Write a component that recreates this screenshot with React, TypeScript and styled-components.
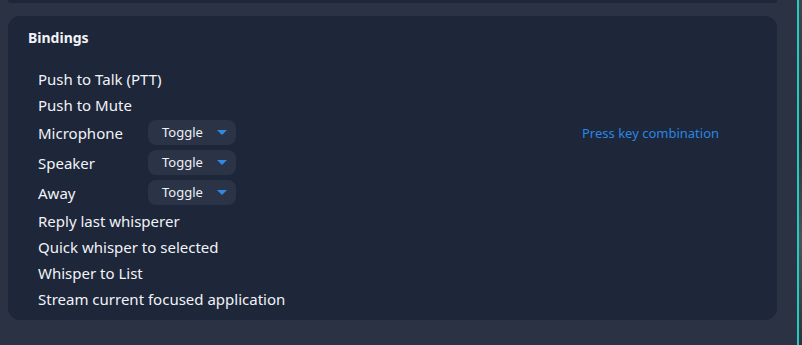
import { createGlobalStyle } from 'styled-components';
import styled from 'styled-components';

const GlobalStyle = createGlobalStyle`
  html, body {
    margin: 0;
    padding: 0;
    background: #2b3244;
  }
  body {
    font-family: 'Noto Sans', 'Open Sans', sans-serif;
    color: #f1f3f7;
  }
`;

interface Binding {
  label: string;
  mode?: string;
  hint?: string;
}

const bindings: Binding[] = [
  { label: 'Push to Talk (PTT)' },
  { label: 'Push to Mute' },
  { label: 'Microphone', mode: 'Toggle', hint: 'Press key combination' },
  { label: 'Speaker', mode: 'Toggle' },
  { label: 'Away', mode: 'Toggle' },
  { label: 'Reply last whisperer' },
  { label: 'Quick whisper to selected' },
  { label: 'Whisper to List' },
  { label: 'Stream current focused application' },
];

const Caret = () => (
  <svg width="10" height="5" viewBox="0 0 10 5">
    <path d="M0 0 L10 0 L5 5 Z" fill="#2f8ae0" />
  </svg>
);

export default function App() {
  return (
    <>
      <GlobalStyle />
      <Window>
        <Content>
          <TopCard />
          <Card>
            <Title>Bindings</Title>
            <List>
              {bindings.map((b) => (
                <Row key={b.label} $tall={!!b.mode}>
                  <Label $wide={!!b.mode}>{b.label}</Label>
                  {b.mode && (
                    <Select>
                      <span>{b.mode}</span>
                      <Caret />
                    </Select>
                  )}
                  {b.hint && <Hint>{b.hint}</Hint>}
                </Row>
              ))}
            </List>
          </Card>
        </Content>
        <Edge />
        <Behind />
      </Window>
    </>
  );
}

const Window = styled.div`
  display: flex;
  width: 802px;
  height: 345px;
  overflow: hidden;
`;

const Content = styled.div`
  width: 769px;
  padding: 0 20px 0 8px;
  display: flex;
  flex-direction: column;
  gap: 13px;
`;

const TopCard = styled.div`
  height: 3px;
  background: #1e263a;
  border-radius: 0 0 8px 8px;
`;

const Card = styled.div`
  background: #1e263a;
  border-radius: 12px;
  padding: 14px 20px 9px 20px;
  height: 281px;
  box-sizing: content-box;
`;

const Title = styled.div`
  font-size: 14px;
  font-weight: 700;
  line-height: 16px;
  margin-bottom: 20px;
`;

const List = styled.div`
  display: flex;
  flex-direction: column;
  padding-left: 10px;
`;

const Row = styled.div<{ $tall: boolean }>`
  display: flex;
  align-items: center;
  height: ${(p) => (p.$tall ? '30px' : '26px')};
`;

const Label = styled.div<{ $wide: boolean }>`
  font-size: 15px;
  white-space: nowrap;
  width: ${(p) => (p.$wide ? '110px' : 'auto')};
`;

const Select = styled.div`
  display: flex;
  align-items: center;
  justify-content: space-between;
  box-sizing: border-box;
  width: 88px;
  height: 25px;
  margin-top: -1px;
  padding: 0 9px 1px 14px;
  background: #2b3346;
  border-radius: 8px;
  font-size: 13px;
  color: #eef1f6;
`;

const Hint = styled.div`
  margin-left: 346px;
  font-size: 13px;
  color: #2a86e0;
`;

const Edge = styled.div`
  width: 2px;
  background: #27c8c0;
`;

const Behind = styled.div`
  flex: 1;
  background: linear-gradient(#3c4650, #2a3438 40%, #4a5458 70%, #2a3438);
`;
